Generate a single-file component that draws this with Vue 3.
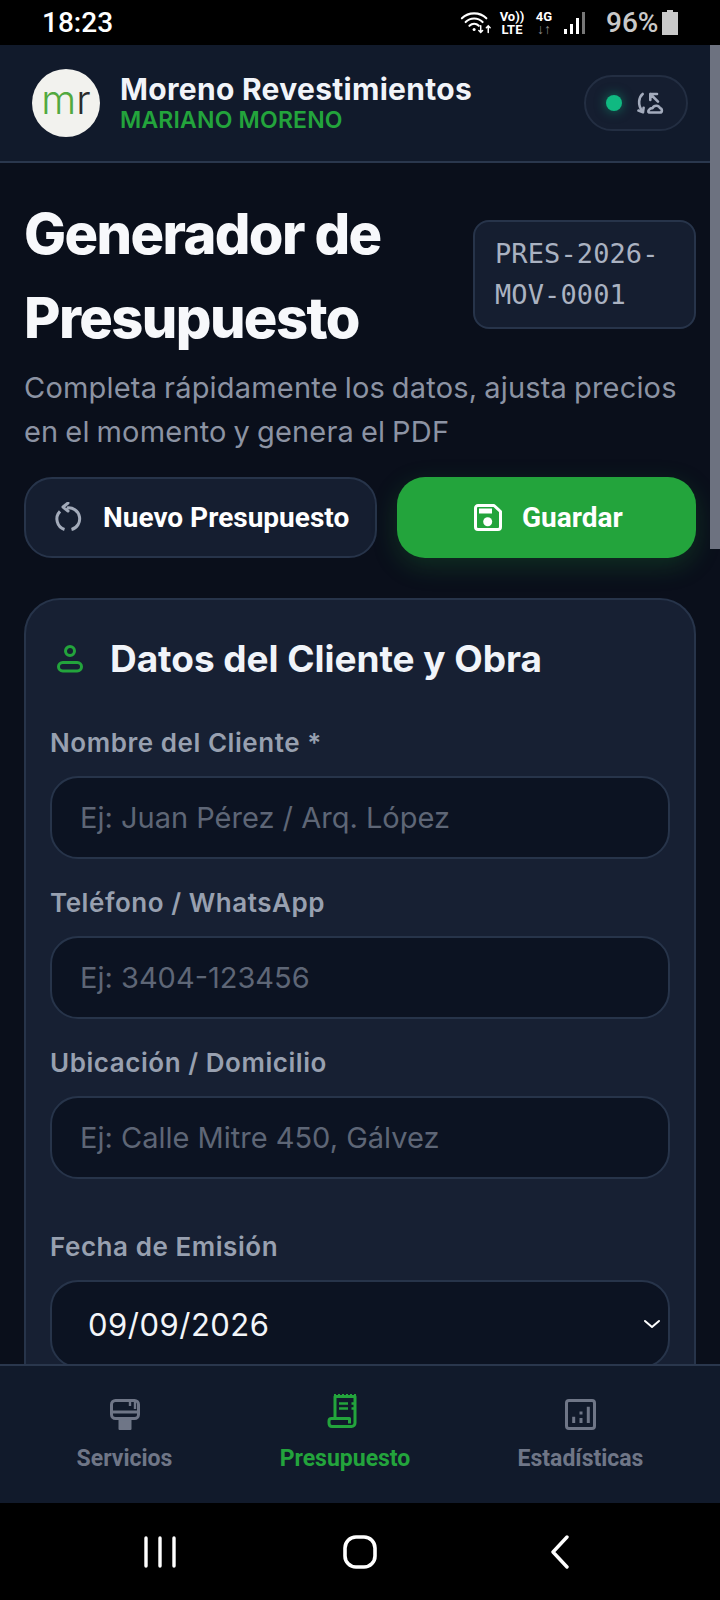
<script setup>
const fields = [
  { label: 'Nombre del Cliente *', ph: 'Ej: Juan Pérez / Arq. López' },
  { label: 'Teléfono / WhatsApp', ph: 'Ej: 3404-123456' },
  { label: 'Ubicación / Domicilio', ph: 'Ej: Calle Mitre 450, Gálvez' },
]
</script>

<template>
  <div class="phone">
    <div class="status">
      <span class="time">18:23</span>
      <div class="status-right">
        <svg class="wifi" width="32" height="26" viewBox="0 0 34 26" fill="none" stroke="#fff" stroke-width="2.2" stroke-linecap="round">
          <path d="M2 8 C9 1 21 1 28 8" />
          <path d="M6 12 C11 7 19 7 24 12" />
          <path d="M10 16 C13 13 17 13 20 16" />
          <circle cx="15" cy="20" r="1.6" fill="#fff" stroke="none" />
          <path d="M22 16v7M20 21l2 2 2-2M30 23v-7M28 18l2-2 2 2" stroke-width="1.6" />
        </svg>
        <div class="volte"><span>Vo))</span><span>LTE</span></div>
        <div class="fourg"><span>4G</span><span class="arrows">↓↑</span></div>
        <svg class="signal" width="22" height="24" viewBox="0 0 22 24">
          <rect x="1" y="18" width="3" height="5" fill="#fff" />
          <rect x="7" y="13" width="3" height="10" fill="#fff" />
          <rect x="13" y="7" width="3" height="16" fill="#fff" />
          <rect x="19" y="1" width="3" height="22" fill="#777" />
        </svg>
        <span class="pct">96%</span>
        <svg class="battery" width="16" height="25" viewBox="0 0 16 25"><path d="M5 0h6v2h5v23H0V2h5z" fill="#c9c9c9" /></svg>
      </div>
    </div>

    <header class="top">
      <div class="logo"><span class="m">m</span><span class="r">r</span></div>
      <div class="brand">
        <div class="brand-name">Moreno Revestimientos</div>
        <div class="brand-sub">MARIANO MORENO</div>
      </div>
      <div class="sync">
        <span class="dot"></span>
        <svg width="27" height="24" viewBox="0 0 27 24" fill="none" stroke="#a3abbc" stroke-width="2.6" stroke-linecap="round" stroke-linejoin="round">
          <path d="M5.700 3C2 6 0 14 5.700 20.700" />
          <path d="M1.500 19.500L6 21.200l.6-4.500" />
          <path d="M13.300 9V3H20M13.300 3L21 10.700" />
          <path d="M12 21.500h11c2.500 0 2.500-4 0-4.300-1-3-6-3.500-7.500 0-2.500-.3-5.500 3-3.500 4.300z" />
        </svg>
      </div>
    </header>

    <main class="scroll">
      <div class="title-row">
        <h1>Generador de Presupuesto</h1>
        <div class="code">PRES-2026-<br />MOV-0001</div>
      </div>
      <p class="sub">Completa rápidamente los datos, ajusta precios en el momento y genera el PDF</p>

      <div class="actions">
        <button class="btn ghost">
          <svg width="30" height="32" viewBox="0 0 30 32" fill="none" stroke="#a3abba" stroke-width="3" stroke-linejoin="round">
            <path d="M14 6A11 11 0 0 1 18.500 27.500" />
            <path d="M11.500 27.500A11 11 0 0 1 7 9.400" />
            <path d="M15 1L10 5l5 4" stroke-linecap="round" />
          </svg>
          Nuevo Presupuesto
        </button>
        <button class="btn green">
          <svg width="30" height="30" viewBox="0 0 30 30" fill="none" stroke="#fff" stroke-width="3" stroke-linejoin="round">
            <path d="M5 2.500h16l6.500 6V24a2.500 2.500 0 0 1-2.500 2.500H5A2.500 2.500 0 0 1 2.500 24V5A2.500 2.500 0 0 1 5 2.500z" />
            <rect x="6" y="5.500" width="13" height="5" fill="#fff" stroke="none" />
            <circle cx="14.700" cy="18.700" r="4.500" fill="#fff" stroke="none" />
          </svg>
          Guardar
        </button>
      </div>

      <section class="card">
        <div class="card-head">
          <svg width="30" height="30" viewBox="0 0 30 30" fill="none" stroke="#23a43c" stroke-width="3">
            <circle cx="15" cy="8" r="4.500" />
            <rect x="3.500" y="19.500" width="23" height="8.500" rx="4.250" />
          </svg>
          <h2>Datos del Cliente y Obra</h2>
        </div>

        <div class="fields">
          <div v-for="f in fields" :key="f.label" class="field">
            <label>{{ f.label }}</label>
            <div class="input">{{ f.ph }}</div>
          </div>
        </div>

        <div class="field date">
          <label>Fecha de Emisión</label>
          <div class="input select">
            <span>09/09/2026</span>
            <svg width="18" height="10" viewBox="0 0 18 10" fill="none" stroke="#fff" stroke-width="2" stroke-linecap="round" stroke-linejoin="round">
              <path d="M2 2l7 6 7-6" />
            </svg>
          </div>
        </div>
      </section>
    </main>

    <nav class="nav">
      <div class="nav-item">
        <svg width="32" height="38" viewBox="0 -5 32 38" fill="none" stroke="#6f7687" stroke-width="3" stroke-linejoin="round">
          <rect x="2.500" y="3.500" width="27" height="18" rx="4" />
          <path d="M2.500 15h27" />
          <path d="M21 4v5M26 4v8" stroke-width="2.400" />
          <path d="M10 23h12v9c0 3.500-12 3.500-12 0z" fill="#6f7687" stroke-width="1" />
        </svg>
        <span>Servicios</span>
      </div>
      <div class="nav-item active">
        <svg width="36" height="38" viewBox="0 0 36 38" fill="none" stroke="#23a43c" stroke-width="3" stroke-linejoin="round">
          <path d="M8 26V4.500h20V31c0 2-1.500 3.500-3.500 3.500H5c-2 0-3-1.500-3-3.500v-2c0-1.500 1-2.500 2.500-2.500h18v5" />
          <path d="M7 3h22" stroke-width="2" stroke-dasharray="2 2" />
          <path d="M12 11.500h9M12 16.500h9M24.500 11.500h2.500M24.500 16.500h2.500" stroke-width="2.600" />
        </svg>
        <span>Presupuesto</span>
      </div>
      <div class="nav-item">
        <svg width="34" height="38" viewBox="0 -6 34 38" fill="none" stroke="#6f7687" stroke-width="3">
          <rect x="2.500" y="2.500" width="28" height="28" rx="2.500" />
          <path d="M9.700 18.700V25M17 13.500v3M17 20v5M24.300 8.700V25" />
        </svg>
        <span>Estadísticas</span>
      </div>
    </nav>

    <div class="sysnav">
      <svg width="34" height="32" viewBox="0 0 34 32" stroke="#fff" stroke-width="3.400" stroke-linecap="round">
        <path d="M3 2v28M17 2v28M31 2v28" />
      </svg>
      <svg width="36" height="36" viewBox="0 0 36 36" fill="none" stroke="#fff" stroke-width="3.600">
        <rect x="3" y="3" width="30" height="30" rx="11" />
      </svg>
      <svg width="20" height="34" viewBox="0 0 20 34" fill="none" stroke="#fff" stroke-width="3.400" stroke-linecap="round" stroke-linejoin="round">
        <path d="M17 2L3 17l14 15" />
      </svg>
    </div>

    <div class="scrollbar"></div>
  </div>
</template>

<style>
html, body { margin: 0; background: #000; }
</style>

<style scoped>
* { box-sizing: border-box; }
.phone {
  position: relative;
  width: 720px;
  height: 1600px;
  display: flex;
  flex-direction: column;
  overflow: hidden;
  background: #0a0f1b;
  font-family: Inter, "Noto Sans", sans-serif;
  color: #f4f6fa;
}
.status {
  height: 45px;
  flex: none;
  background: #000;
  display: flex;
  align-items: center;
  justify-content: space-between;
  padding: 0 42px;
  font-family: Roboto, sans-serif;
}
.time { font-size: 28px; font-weight: 500; color: #fff; }
.status-right { display: flex; align-items: center; color: #fff; }
.volte, .fourg {
  display: flex; flex-direction: column; align-items: center;
  font-weight: 700; line-height: 13px;
}
.volte { width: 24px; margin-left: 8px; font-size: 13px; }
.fourg { width: 20px; margin-left: 10px; font-size: 13px; }
.signal { margin-left: 9px; }
.arrows { color: #8a8a8a; font-size: 14px; }
.pct { width: 51px; margin-left: 21px; font-size: 28px; font-weight: 500; color: #c9c9c9; }
.battery { margin-left: 5px; }
.top {
  height: 118px;
  flex: none;
  background: #111a2b;
  border-bottom: 2px solid #2a374d;
  display: flex;
  align-items: center;
  padding: 0 32px;
}
.logo {
  width: 68px; height: 68px; border-radius: 50%;
  background: #f2f2ee;
  display: flex; align-items: center; justify-content: center;
  font-size: 40px; font-weight: 300; line-height: 1; padding-bottom: 7px;
}
.m { color: #52a93f; }
.r { color: #2b2b2b; }
.brand { margin-left: 20px; flex: 1; }
.brand-name { font-size: 30px; font-weight: 700; line-height: 34px; letter-spacing: .3px; color: #f1f4f9; }
.brand-sub { font-size: 23px; font-weight: 600; line-height: 28px; letter-spacing: .2px; color: #23a43c; }
.sync {
  width: 104px; height: 56px; border-radius: 28px;
  border: 2px solid #232e42;
  background: #151e30;
  display: flex; align-items: center; gap: 15px;
  padding-left: 20px;
}
.dot {
  width: 16px; height: 16px; border-radius: 50%;
  background: #10b981;
  box-shadow: 0 0 12px rgba(16, 185, 129, .55);
}
.scroll { flex: 1; min-height: 0; overflow: hidden; padding: 29px 24px 0; }
.title-row { display: flex; align-items: center; justify-content: space-between; gap: 19px; }
h1 {
  margin: 0; width: 420px;
  font-size: 56px; line-height: 84px; font-weight: 800; letter-spacing: -1.6px; color: #f7f8fb;
}
.code {
  width: 223px; height: 109px; flex: none;
  border: 2px solid #27344a;
  border-radius: 16px;
  background: #151e30;
  padding: 0 20px;
  margin-bottom: 4px;
  display: flex; align-items: center;
  font-family: "DejaVu Sans Mono", monospace;
  font-size: 27px; line-height: 41px; color: #aab2c1;
  letter-spacing: .1px;
}
.sub {
  margin: 6px 0 0;
  font-size: 29px; line-height: 44px; color: #8c93a3; letter-spacing: .2px; word-spacing: -1.5px;
}
.actions { display: flex; gap: 20px; margin-top: 23px; }
.btn {
  height: 81px; border-radius: 28px;
  display: flex; align-items: center;
  font-family: Roboto, sans-serif; font-size: 28px; font-weight: 700;
  color: #fff;
}
.btn.ghost { width: 353px; background: #151e30; border: 2px solid #27344a; gap: 20px; padding-left: 27px; }
.btn.green {
  width: 299px; background: #23a43c; border: 0; gap: 19px; padding-left: 76px;
  box-shadow: 0 8px 26px rgba(35, 164, 60, .22);
}
.card {
  margin-top: 40px;
  background: #172033;
  border: 2px solid #27344a;
  border-radius: 36px;
  padding: 22px 24px 0;
  height: 900px;
}
.card-head { display: flex; align-items: center; gap: 25px; height: 72px; padding-left: 5px; }
h2 { margin: 0; font-size: 37px; font-weight: 700; letter-spacing: -.05px; color: #f1f4f9; }
.fields { display: flex; flex-direction: column; margin-top: 27px; }
.field { height: 160px; }
.field label {
  display: block; height: 44px; line-height: 44px;
  font-size: 26px; font-weight: 600; letter-spacing: .55px; color: #98a0b0;
}
.input {
  margin-top: 11px;
  height: 83px; border-radius: 28px;
  border: 2px solid #27344a;
  background: #0c1322;
  display: flex; align-items: center;
  padding: 0 28px;
  font-size: 29px; color: #5e6676;
}
.date { margin-top: 24px; }
.select {
  height: 88px;
  color: #f3f5f9; justify-content: space-between;
  padding: 0 7px 0 36px; font-size: 31px; letter-spacing: .5px;
}
.nav {
  height: 139px; flex: none;
  background: #111a2b;
  border-top: 2px solid #2a374d;
  display: grid; grid-template-columns: 249px 192px 279px;
  padding-top: 26px;
}
.nav-item {
  display: flex; flex-direction: column; align-items: center; gap: 15px;
  font-family: Roboto, sans-serif; font-size: 23px; line-height: 27px; font-weight: 700; color: #6f7687;
}
.nav-item.active { color: #23a43c; }
.sysnav {
  height: 97px; flex: none;
  background: #000;
  display: grid; grid-template-columns: 320px 80px 320px;
  align-items: center; justify-items: center;
}
.scrollbar {
  position: absolute; top: 45px; right: 0; width: 10px; height: 504px; background: #6d7280;
}
</style>
